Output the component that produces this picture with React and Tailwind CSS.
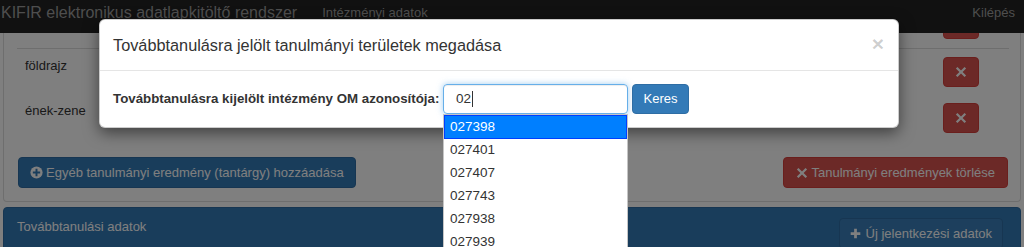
import React from 'react';

const RemoveIcon = ({ className }) => (
  <svg viewBox="0 0 16 16" className={className} fill="currentColor">
    <path d="M3.3 1.2 8 5.9l4.7-4.7 2.1 2.1L10.1 8l4.7 4.7-2.1 2.1L8 10.1l-4.7 4.7-2.1-2.1L5.9 8 1.2 3.3z" />
  </svg>
);

const PlusSignIcon = ({ className }) => (
  <svg viewBox="0 0 16 16" className={className}>
    <circle cx="8" cy="8" r="7.5" fill="currentColor" />
    <path d="M6.8 3.5h2.4v3.3h3.3v2.4H9.2v3.3H6.8V9.2H3.5V6.8h3.3z" fill="#337ab7" />
  </svg>
);

const PlusIcon = ({ className }) => (
  <svg viewBox="0 0 16 16" className={className} fill="currentColor">
    <path d="M6 1h4v5h5v4h-5v5H6v-5H1V6h5z" />
  </svg>
);

const DeleteButton = () => (
  <button className="flex h-[30px] w-[36px] items-center justify-center rounded-[4px] border border-[#d43f3a] bg-[#d9534f] text-white">
    <RemoveIcon className="h-[12px] w-[12px]" />
  </button>
);

const suggestions = ['027398', '027401', '027407', '027743', '027938', '027939'];

export default function App() {
  return (
    <div className="relative h-[247px] w-[1024px] overflow-hidden bg-white font-['Liberation_Sans',Arial,sans-serif] text-[13px] text-[#333]">
      {/* navbar */}
      <nav className="relative z-10 flex h-[33px] items-start bg-[#222] text-[#9d9d9d]">
        <span className="ml-[1px] mt-[3px] text-[16px] leading-[20px]">KIFIR elektronikus adatlapkitöltő rendszer</span>
        <span className="ml-[25px] mt-[5px] text-[13px] leading-[16px]">Intézményi adatok</span>
        <span className="ml-auto mr-[9px] mt-[5px] text-[13px] leading-[16px]">Kilépés</span>
      </nav>

      {/* tanulmányi eredmények panel */}
      <div className="mx-[3px] rounded-b-[4px] border-x border-b border-[#ddd]">
        <div className="ml-[13px] mr-[11px]">
          <div className="flex h-[16px] items-end justify-end overflow-hidden border-b border-[#ddd] pb-[9px] pr-[30px]">
            <div className="shrink-0">
              <DeleteButton />
            </div>
          </div>
          <div className="flex h-[46px] items-center justify-between pl-[8px] pr-[30px]">
            <span className="self-start pt-[7px] leading-[20px]">földrajz</span>
            <DeleteButton />
          </div>
          <div className="flex h-[46px] items-center justify-between pl-[8px] pr-[30px]">
            <span className="self-start pt-[6px] leading-[20px]">ének-zene</span>
            <DeleteButton />
          </div>
        </div>
        <div className="mt-[16px] flex justify-between pb-[13px] pl-[14px] pr-[12px]">
          <button className="flex h-[31px] items-center gap-[3px] rounded-[4px] border border-[#2e6da4] bg-[#337ab7] pl-[11px] pr-[11px] text-white">
            <PlusSignIcon className="h-[13px] w-[13px] text-white" />
            <span>Egyéb tanulmányi eredmény (tantárgy) hozzáadása</span>
          </button>
          <button className="flex h-[31px] items-center gap-[3px] rounded-[4px] border border-[#d43f3a] bg-[#d9534f] pl-[12px] pr-[12px] text-white">
            <RemoveIcon className="h-[12px] w-[12px]" />
            <span>Tanulmányi eredmények törlése</span>
          </button>
        </div>
      </div>

      {/* továbbtanulási adatok panel */}
      <div className="mx-[3px] mt-[5px] rounded-t-[4px] border border-[#2e6da4] bg-[#337ab7]">
        <div className="flex h-[60px] items-start justify-between pl-[13px] pr-[17px]">
          <span className="mt-[9px] text-white">Továbbtanulási adatok</span>
          <button className="mt-[10px] flex h-[31px] items-center gap-[5px] rounded-[4px] border border-[#2e6da4] bg-[#3a7fbb] pl-[10px] pr-[10px] text-white">
            <PlusIcon className="h-[11px] w-[11px]" />
            <span>Új jelentkezési adatok</span>
          </button>
        </div>
      </div>

      {/* backdrop */}
      <div className="absolute inset-0 z-20 bg-black/50" />

      {/* modal */}
      <div className="absolute left-[99px] top-[19px] z-30 w-[800px] rounded-[6px] border border-black/20 bg-white shadow-[0_5px_15px_rgba(0,0,0,0.5)]">
        <div className="flex h-[51px] items-center justify-between border-b border-[#e5e5e5] pl-[13px] pr-[14px]">
          <h4 className="text-[16.3px] leading-[22px] text-[#333]">Továbbtanulásra jelölt tanulmányi területek megadása</h4>
          <span className="mb-[4px] text-[21px] font-bold leading-none text-black/20">×</span>
        </div>
        <div className="flex items-center pb-[13px] pl-[13px] pt-[13px]">
          <label className="w-[330px] whitespace-nowrap text-[13.3px] font-bold">Továbbtanulásra kijelölt intézmény OM azonosítója:</label>
          <div className="flex h-[30px] w-[185px] items-center rounded-[4px] border border-[#66afe9] pl-[12px] shadow-[inset_0_1px_1px_rgba(0,0,0,0.075),0_0_6px_rgba(102,175,233,0.6)]">
            <span className="text-[13.5px]">02</span>
            <span className="ml-[1px] h-[16px] w-px bg-[#333]" />
          </div>
          <button className="ml-[4px] h-[30px] w-[57px] rounded-[4px] border border-[#2e6da4] bg-[#337ab7] text-white">Keres</button>
        </div>
      </div>

      {/* autocomplete */}
      <ul className="absolute left-[443px] top-[114px] z-40 w-[185px] border border-[#c5c5c5] bg-white text-[13.5px]">
        {suggestions.map((code, i) => (
          <li
            key={code}
            className={
              i === 0
                ? 'flex h-[24px] items-center border border-[#003eff] bg-[#007fff] pl-[5px] text-white'
                : 'flex h-[23px] items-center pl-[6px] text-[#333]'
            }
          >
            {code}
          </li>
        ))}
      </ul>
    </div>
  );
}
